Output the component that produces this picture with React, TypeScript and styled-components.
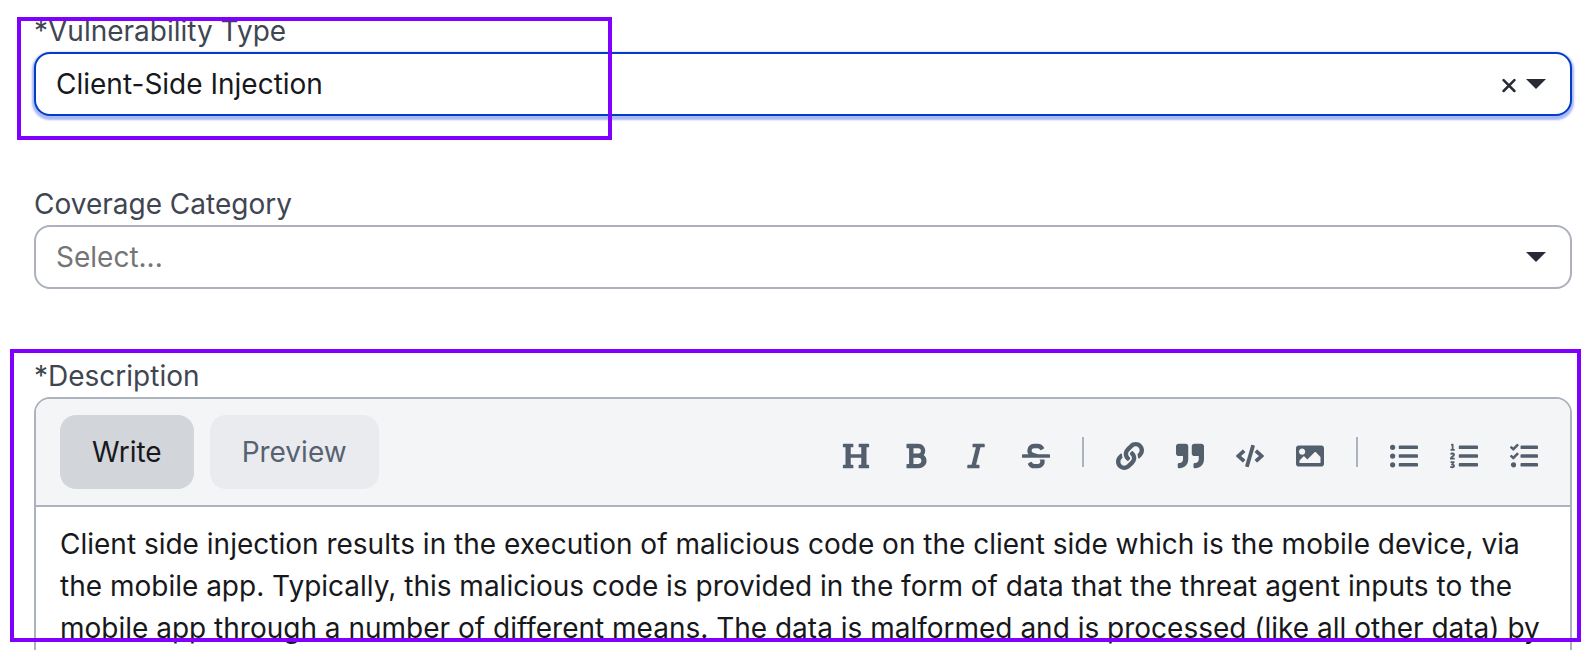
import { useState } from "react";
import type { ReactNode } from "react";
import styled, { createGlobalStyle } from "styled-components";
import {
  FaBold,
  FaCode,
  FaHeading,
  FaImage,
  FaItalic,
  FaLink,
  FaListOl,
  FaListUl,
  FaQuoteRight,
  FaStrikethrough,
  FaTasks,
} from "react-icons/fa";

const GlobalStyle = createGlobalStyle`
  *, *::before, *::after { box-sizing: border-box; }
  body {
    margin: 0;
    background: #ffffff;
    color: #17181c;
    font-family: Inter, "Liberation Sans", sans-serif;
    font-size: 28px;
    line-height: 42px;
  }
  button, select, textarea { font: inherit; color: inherit; }
`;

const Page = styled.form`
  display: flex;
  flex-direction: column;
  height: 100vh;
  overflow: hidden;
  padding: 10px 16px 0 34px;
`;

const Field = styled.div`
  position: relative;
  flex: none;
  display: flex;
  flex-direction: column;
`;

const SelectField = styled(Field)`
  & + & {
    margin-top: 67px;
  }
`;

const EditorField = styled(Field)`
  margin-top: 66px;
`;

const Label = styled.label`
  color: #3f4652;
`;

const SelectFrame = styled.div<{ $active?: boolean }>`
  display: grid;
  height: 64px;
  border: 2px solid ${(p) => (p.$active ? "#033dc7" : "#acb1bd")};
  border-radius: 16px;
  background: #ffffff;
  box-shadow: ${(p) => (p.$active ? "0 2px 2px 2px #a9b9f5" : "none")};

  & > * {
    grid-area: 1 / 1;
  }
`;

const Select = styled.select<{ $empty: boolean }>`
  appearance: none;
  width: 100%;
  padding: 0 96px 0 20px;
  border: 0;
  border-radius: 14px;
  outline: none;
  background: transparent;
  color: ${(p) => (p.$empty ? "#757575" : "#17181c")};
`;

const Indicators = styled.div`
  display: flex;
  align-items: center;
  justify-self: end;
  gap: 10px;
  padding-right: 24px;
  color: #272b35;
  pointer-events: none;
`;

const ClearButton = styled.button`
  display: flex;
  padding: 0;
  border: 0;
  background: none;
  cursor: pointer;
  pointer-events: auto;
`;

const Editor = styled.div`
  border: 2px solid #acb3be;
  border-radius: 16px;
  overflow: hidden;
`;

const Toolbar = styled.div`
  display: flex;
  align-items: center;
  justify-content: space-between;
  padding: 16px 32px 16px 24px;
  border-bottom: 2px solid #acb3be;
  background: #f4f5f7;
`;

const Tabs = styled.div`
  display: flex;
  gap: 16px;
`;

const Tab = styled.button<{ $selected: boolean }>`
  padding: 16px 32px;
  border: 0;
  border-radius: 16px;
  background: ${(p) => (p.$selected ? "#d2d5da" : "#eaebef")};
  color: ${(p) => (p.$selected ? "#17181c" : "#566270")};
  cursor: pointer;
`;

const Tools = styled.div`
  display: flex;
  align-items: center;
  gap: 32px;
`;

const ToolButton = styled.button`
  display: flex;
  padding: 8px 0 0;
  border: 0;
  background: none;
  color: #545f6d;
  cursor: pointer;
`;

const Divider = styled.span`
  width: 2px;
  height: 30px;
  background: #acb3be;
`;

const TextArea = styled.textarea`
  display: block;
  width: 100%;
  height: 320px;
  padding: 16px 24px;
  border: 0;
  outline: none;
  resize: none;
  overflow: hidden;
  background: #ffffff;
`;

const Highlight = styled.div`
  position: absolute;
  border: 4px solid #8000ff;
  pointer-events: none;
`;

const TypeHighlight = styled(Highlight)`
  top: 7px;
  left: -17px;
  width: 595px;
  height: 123px;
`;

const DescriptionHighlight = styled(Highlight)`
  top: -6px;
  left: -24px;
  right: -9px;
  height: 293px;
`;

const Chevron = () => (
  <svg width="20" height="10" viewBox="0 0 20 10" aria-hidden="true">
    <path d="M0 0H20L10 10Z" fill="currentColor" />
  </svg>
);

const Cross = () => (
  <svg width="14" height="18" viewBox="0 0 14 18" aria-hidden="true">
    <path
      d="M1.6 5.2L12.4 16M12.4 5.2L1.6 16"
      stroke="currentColor"
      strokeWidth="2.5"
      strokeLinecap="round"
      fill="none"
    />
  </svg>
);

const tools: { name: string; icon: ReactNode }[][] = [
  [
    { name: "Heading", icon: <FaHeading size={28} /> },
    { name: "Bold", icon: <FaBold size={28} /> },
    { name: "Italic", icon: <FaItalic size={28} /> },
    { name: "Strikethrough", icon: <FaStrikethrough size={28} /> },
  ],
  [
    { name: "Link", icon: <FaLink size={28} /> },
    { name: "Quote", icon: <FaQuoteRight size={28} /> },
    { name: "Code", icon: <FaCode size={28} /> },
    { name: "Image", icon: <FaImage size={28} /> },
  ],
  [
    { name: "Bulleted list", icon: <FaListUl size={28} /> },
    { name: "Numbered list", icon: <FaListOl size={28} /> },
    { name: "Task list", icon: <FaTasks size={28} /> },
  ],
];

const initialDescription =
  "Client side injection results in the execution of malicious code on the client side which is the mobile device, via the mobile app. Typically, this malicious code is provided in the form of data that the threat agent inputs to the mobile app through a number of different means. The data is malformed and is processed (like all other data) by";

export default function App() {
  const [type, setType] = useState("Client-Side Injection");
  const [category, setCategory] = useState("");
  const [tab, setTab] = useState("Write");
  const [description, setDescription] = useState(initialDescription);

  return (
    <>
      <GlobalStyle />
      <Page>
        <SelectField>
          <Label htmlFor="type">*Vulnerability Type</Label>
          <SelectFrame $active>
            <Select id="type" $empty={!type} value={type} onChange={(e) => setType(e.target.value)}>
              <option value="">Select...</option>
              <option>Client-Side Injection</option>
            </Select>
            <Indicators>
              {type && (
                <ClearButton type="button" aria-label="Clear" onClick={() => setType("")}>
                  <Cross />
                </ClearButton>
              )}
              <Chevron />
            </Indicators>
          </SelectFrame>
          <TypeHighlight />
        </SelectField>

        <SelectField>
          <Label htmlFor="category">Coverage Category</Label>
          <SelectFrame>
            <Select id="category" $empty={!category} value={category} onChange={(e) => setCategory(e.target.value)}>
              <option value="">Select...</option>
            </Select>
            <Indicators>
              <Chevron />
            </Indicators>
          </SelectFrame>
        </SelectField>

        <EditorField>
          <Label htmlFor="description">*Description</Label>
          <Editor>
            <Toolbar>
              <Tabs>
                {["Write", "Preview"].map((name) => (
                  <Tab key={name} type="button" $selected={tab === name} onClick={() => setTab(name)}>
                    {name}
                  </Tab>
                ))}
              </Tabs>
              <Tools>
                {tools.map((group, i) => [
                  i > 0 && <Divider key={`divider-${i}`} />,
                  ...group.map((tool) => (
                    <ToolButton key={tool.name} type="button" aria-label={tool.name}>
                      {tool.icon}
                    </ToolButton>
                  )),
                ])}
              </Tools>
            </Toolbar>
            <TextArea
              id="description"
              spellCheck={false}
              readOnly={tab === "Preview"}
              value={description}
              onChange={(e) => setDescription(e.target.value)}
            />
          </Editor>
          <DescriptionHighlight />
        </EditorField>
      </Page>
    </>
  );
}
